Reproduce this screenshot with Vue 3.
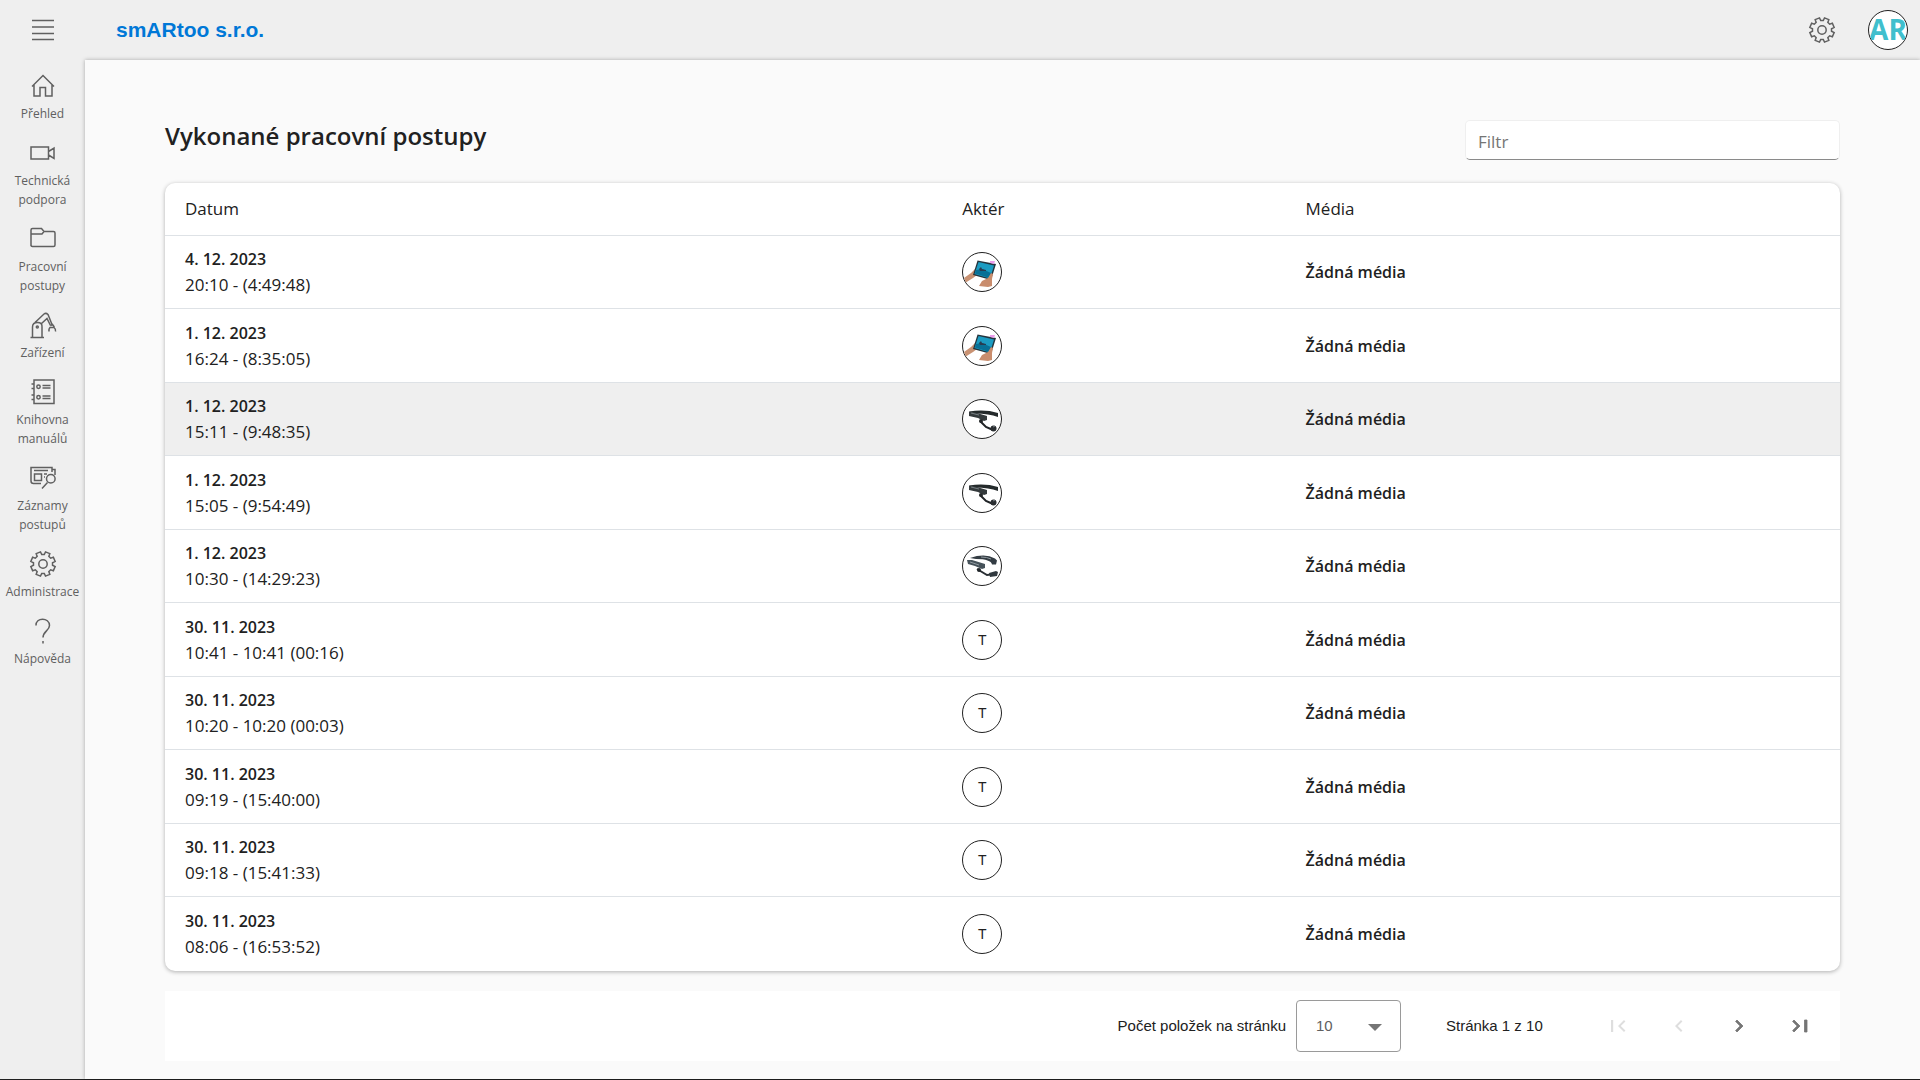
<script setup>
import { ref } from 'vue'

const filter = ref('')
const pageSize = ref('10')

const nav = [
  { id: 'home', label: 'Přehled' },
  { id: 'video', label: 'Technická podpora' },
  { id: 'folder', label: 'Pracovní postupy' },
  { id: 'robot', label: 'Zařízení' },
  { id: 'manual', label: 'Knihovna manuálů' },
  { id: 'records', label: 'Záznamy postupů' },
  { id: 'gear', label: 'Administrace' },
  { id: 'help', label: 'Nápověda' },
]

const rows = [
  { date: '4. 12. 2023', time: '20:10 - (4:49:48)', actor: 'tablet' },
  { date: '1. 12. 2023', time: '16:24 - (8:35:05)', actor: 'tablet' },
  { date: '1. 12. 2023', time: '15:11 - (9:48:35)', actor: 'headset', active: true },
  { date: '1. 12. 2023', time: '15:05 - (9:54:49)', actor: 'headset' },
  { date: '1. 12. 2023', time: '10:30 - (14:29:23)', actor: 'headset2' },
  { date: '30. 11. 2023', time: '10:41 - 10:41 (00:16)', actor: 'T' },
  { date: '30. 11. 2023', time: '10:20 - 10:20 (00:03)', actor: 'T' },
  { date: '30. 11. 2023', time: '09:19 - (15:40:00)', actor: 'T' },
  { date: '30. 11. 2023', time: '09:18 - (15:41:33)', actor: 'T' },
  { date: '30. 11. 2023', time: '08:06 - (16:53:52)', actor: 'T' },
]

// Eight-toothed outline shared by the sidebar and the header gear.
const gearPath = (() => {
  const points = []
  const teeth = 8
  for (let i = 0; i < teeth; i++) {
    const base = (i * 2 * Math.PI) / teeth + Math.PI / 8
    for (const [offset, radius] of [[-0.26, 9.6], [-0.19, 12.4], [0.19, 12.4], [0.26, 9.6]]) {
      const a = base + offset
      points.push(`${(14 + radius * Math.cos(a)).toFixed(2)} ${(14 + radius * Math.sin(a)).toFixed(2)}`)
    }
  }
  return `M${points.join('L')}Z`
})()
</script>

<template>
  <div class="app">
    <header class="topbar">
      <button class="icon-button menu" type="button" aria-label="Menu">
        <svg class="icon" viewBox="0 0 28 28"><path d="M3 4.5h22M3 11h22M3 17.500h22M3 23.500h22" /></svg>
      </button>
      <a class="brand" href="#">smARtoo s.r.o.</a>
      <button class="icon-button settings" type="button" aria-label="Nastavení">
        <svg class="icon" viewBox="0 0 28 28"><path :d="gearPath" /><circle cx="14" cy="14" r="4.200" /></svg>
      </button>
      <button class="avatar profile" type="button" aria-label="Profil">
        <svg viewBox="0 0 38 38"><text x="19" y="29" text-anchor="middle" class="logo">AR</text></svg>
      </button>
    </header>

    <div class="body">
      <nav class="sidebar">
        <a v-for="item in nav" :key="item.id" class="nav-item" href="#">
          <svg class="icon" viewBox="0 0 28 28" aria-hidden="true">
            <path v-if="item.id === 'home'" d="M3 14.500 14 3.500 25 14.500M5 13v11h6v-8.500h5.500V24H23V13" />
            <g v-else-if="item.id === 'video'"><path d="M2 8h17.500v12H2zM19.500 12.500l5.500-3.500v10.500l-5.500-3.500" /></g>
            <g v-else-if="item.id === 'folder'"><path d="M2 21V5q0-1.500 1.500-1.500h9l2.500 3h9.500Q26 6.500 26 8v12q0 1.500-1.500 1.500h-21Q2 21.500 2 20M2 9h11l2-2.500" /></g>
            <g v-else-if="item.id === 'robot'">
              <path d="M1.500 26.500H15M3.500 26V16q0-4.500 5-4.500T13 16v10M6 11.500 15 3q2-1.500 4 .5l4 10M12 13l6-5.500 3.500 7M21.500 14.500l2-1 1.500 2v1q2 1.500 1.500 4M21.500 16q-2 1.500-1.500 4.500M21 16.500h4" />
              <circle cx="8.300" cy="16" r="1" />
            </g>
            <g v-else-if="item.id === 'manual'">
              <path d="M5 2h20v23.500H5zM2.500 6H5M2.500 10.500H5M2.500 17H5M2.500 21.500H5M13.500 7.500h8M13.500 10h8M13.500 18h8M13.500 20.500h8" />
              <circle cx="9.500" cy="8.700" r="1.700" /><circle cx="9.500" cy="19.200" r="1.700" />
            </g>
            <g v-else-if="item.id === 'records'">
              <path d="M12 19.500H4.500Q2 19.500 2 17V3.500h21V8M23 5.500h3V11M5 6.500h14M5.500 10h7v6.500h-7zM15 10h3M15 13h1M18.500 18.500 13 24.500" />
              <circle cx="21.800" cy="14.800" r="4.300" />
            </g>
            <g v-else-if="item.id === 'gear'"><path :d="gearPath" /><circle cx="14" cy="14" r="4.200" /></g>
            <g v-else><path d="M7 8.500C6.500 0 20.500 0 20.500 8.500c0 5-6.500 6-6.500 12M14 24v2.500" /></g>
          </svg>
          <span class="nav-label">{{ item.label }}</span>
        </a>
      </nav>

      <main class="content">
        <div class="heading">
          <h1>Vykonané pracovní postupy</h1>
          <input v-model="filter" class="filter" type="text" placeholder="Filtr" aria-label="Filtr" />
        </div>

        <div class="card">
          <table>
            <thead>
              <tr>
                <th class="col-date" scope="col">Datum</th>
                <th class="col-actor" scope="col">Aktér</th>
                <th scope="col">Média</th>
              </tr>
            </thead>
            <tbody>
              <tr v-for="(row, i) in rows" :key="i" :class="{ active: row.active }">
                <td>
                  <div class="date">{{ row.date }}</div>
                  <div>{{ row.time }}</div>
                </td>
                <td>
                  <div class="avatar">
                    <template v-if="row.actor === 'T'">T</template>
                    <svg v-else-if="row.actor === 'tablet'" viewBox="0 0 38 38">
                      <path d="M1 25 8 20l6-6 2 1-3 5 1 2-4 3-8 5z" fill="#c99273" />
                      <path d="M14.500 7.500 33 11 28 27 10 22z" fill="#24343d" />
                      <path d="M15.500 9 31 12.500 27 25.500 11.500 21z" fill="#1c9cc2" />
                      <path d="m13 17 6-1 9 4-1.500 5L12 20.500z" fill="#087096" />
                      <path d="m16 16 2-2 1 2 4 1v1h-6z" fill="#283c50" />
                      <path d="M27 8h5l-1 3-4-1z" fill="#ec9cec" />
                      <path d="m16 33 3-5 6-3 3-5 2 1-1 5v7l-4 1z" fill="#c98d6d" />
                    </svg>
                    <svg v-else-if="row.actor === 'headset'" viewBox="0 0 38 38">
                      <path d="M6 11.500Q22 9 35 13v4Q26 13.500 12 13.500z" fill="#242a2b" />
                      <path d="M6 11.500 14 13l10 3v4l-3 1-6-3-9-2z" fill="#343a3c" />
                      <path d="m17 21 6 6 7 3" fill="none" stroke="#202326" stroke-width="2" />
                      <circle cx="18" cy="21" r="2" fill="#242729" /><circle cx="30.500" cy="28.500" r="3" fill="#292d30" />
                      <path d="m8 13 8 2M30 27l2-1" stroke="#798185" stroke-width="1" />
                    </svg>
                    <svg v-else viewBox="0 0 38 38">
                      <path d="M7 11Q22 6 32 11.500l2 2-1 4h-4Q28 12 13 12z" fill="#333c43" />
                      <path d="M4 13h5l13 4v4l-3 1-7-3-7-2z" fill="#46525a" />
                      <path d="m14 22 10 6 9-1" fill="none" stroke="#292f34" stroke-width="2" />
                      <path d="m26 26 7-2 2 1-1 4-7 1z" fill="#30383e" /><circle cx="16" cy="23" r="2" fill="#202529" />
                      <path d="m7 15 9 3M18 10q6 0 10 2" fill="none" stroke="#8f999f" stroke-width="1" />
                    </svg>
                  </div>
                </td>
                <td class="media">Žádná média</td>
              </tr>
            </tbody>
          </table>
        </div>

        <div class="pagination">
          <label for="page-size">Počet položek na stránku</label>
          <div class="select-wrap">
            <select id="page-size" v-model="pageSize">
              <option>10</option>
              <option>25</option>
              <option>100</option>
            </select>
            <svg class="arrow" viewBox="0 0 14 8"><path d="M0 1h14L7 8z" /></svg>
          </div>
          <span class="page-info">Stránka 1 z 10</span>
          <div class="pager">
            <button type="button" disabled aria-label="První"><svg viewBox="0 0 24 24"><path d="M18.410 16.590 13.820 12l4.590-4.590L17 6l-6 6 6 6zM4 6h2.200v12H4z" /></svg></button>
            <button type="button" disabled aria-label="Předchozí"><svg viewBox="0 0 24 24"><path d="M15.410 7.410 14 6l-6 6 6 6 1.410-1.410L10.830 12z" /></svg></button>
            <button type="button" aria-label="Další"><svg viewBox="0 0 24 24"><path class="bold" d="M10 6 8.590 7.410 13.170 12l-4.580 4.590L10 18l6-6z" /></svg></button>
            <button type="button" aria-label="Poslední"><svg viewBox="0 0 24 24"><path class="bold" d="M5.590 7.410 10.180 12l-4.590 4.590L7 18l6-6-6-6zM17.500 6h2.500v12h-2.500z" /></svg></button>
          </div>
        </div>
      </main>
    </div>
  </div>
</template>

<style>
body {
  margin: 0;
  background: #efefef;
}
</style>

<style scoped>
.app {
  box-sizing: border-box;
  display: flex;
  flex-direction: column;
  min-height: 100vh;
  border-bottom: 1px solid #202020;
  background: #efefef;
  color: #212121;
  font-family: "Open Sans", "Noto Sans", sans-serif;
  font-size: 17px;
}
.app *,
.app *::before {
  box-sizing: border-box;
}
button {
  padding: 0;
  border: 0;
  background: none;
  font: inherit;
  cursor: pointer;
}
a {
  text-decoration: none;
}
.topbar {
  display: flex;
  align-items: center;
  height: 60px;
  padding-right: 12px;
}
.icon-button {
  display: flex;
  justify-content: center;
  align-items: center;
}
.icon {
  display: block;
  flex: none;
  width: 28px;
  height: 28px;
  fill: none;
  stroke: #606060;
  stroke-width: 1.5;
}
.menu {
  width: 85px;
  height: 60px;
}
.brand {
  margin-left: 31px;
  color: #0078d7;
  font: bold 21px/24px "Liberation Sans", sans-serif;
}
.settings {
  width: 48px;
  height: 48px;
  margin-left: auto;
  margin-right: 22px;
}
.avatar {
  display: flex;
  justify-content: center;
  align-items: center;
  width: 40px;
  height: 40px;
  overflow: hidden;
  border: 1px solid #212121;
  border-radius: 50%;
  background: #fff;
  font: 14px/20px "Liberation Sans", sans-serif;
}
.avatar svg {
  display: block;
  width: 38px;
  height: 38px;
}
.logo {
  fill: #40bfcd;
  font: 700 28px "Open Sans", sans-serif;
}
.body {
  display: flex;
  flex: 1;
}
.sidebar {
  flex: none;
  width: 85px;
  padding-top: 12px;
}
.nav-item {
  display: flex;
  flex-direction: column;
  align-items: center;
  gap: 4px;
  padding-bottom: 16px;
  color: #606060;
}
.nav-label {
  max-width: 80px;
  font-size: 12px;
  line-height: 19px;
  text-align: center;
}
.content {
  flex: 1;
  min-width: 0;
  padding: 60px 80px 18px;
  background: #fafafa;
  box-shadow: 0 0 4px rgba(0, 0, 0, 0.3);
}
.heading {
  display: flex;
  justify-content: space-between;
  align-items: flex-start;
  margin-bottom: 23px;
}
h1 {
  margin: 0;
  font-size: 24px;
  font-weight: 600;
  line-height: 32px;
}
.filter {
  width: 375px;
  height: 40px;
  padding: 2px 12px 0;
  border: 1px solid #efefef;
  border-bottom-color: #8a8a8a;
  border-radius: 5px;
  background: #fff;
  color: #212121;
  font: 17px "Open Sans", sans-serif;
}
.filter::placeholder {
  color: #757575;
}
.card {
  overflow: hidden;
  border-radius: 10px;
  background: #fff;
  box-shadow: 0 1px 4px rgba(0, 0, 0, 0.3);
}
table {
  width: 100%;
  border-collapse: separate;
  border-spacing: 0;
  table-layout: fixed;
}
th,
td {
  padding: 0 20px;
  border-bottom: 1px solid #dee2e6;
  text-align: left;
  vertical-align: middle;
  line-height: 26px;
}
th {
  height: 53px;
  font-weight: 400;
}
.col-date {
  width: 46.4%;
}
.col-actor {
  width: 20.5%;
}
td {
  height: 73px;
}
tr:nth-child(even) td {
  height: 74px;
}
tbody tr:last-child td {
  border-bottom: 0;
}
.active td {
  background: #efefef;
}
.date,
.media {
  font-size: 16px;
  font-weight: 600;
}
.pagination {
  display: flex;
  justify-content: flex-end;
  align-items: center;
  height: 70px;
  margin-top: 20px;
  padding-right: 17px;
  background: #fff;
  font: 15px/20px "Liberation Sans", sans-serif;
}
.select-wrap {
  position: relative;
  margin: 0 45px 0 10px;
}
select {
  display: block;
  width: 105px;
  height: 52px;
  padding: 0 19px;
  appearance: none;
  border: 1px solid #9a9a9a;
  border-radius: 4px;
  background: #fff;
  color: #606060;
  font: inherit;
}
.arrow {
  position: absolute;
  top: 23px;
  right: 19px;
  width: 14px;
  height: 8px;
  fill: #757575;
  pointer-events: none;
}
.page-info {
  min-width: 104px;
}
.pager {
  display: flex;
  gap: 12px;
  margin-left: 45px;
}
.pager button {
  display: flex;
  justify-content: center;
  align-items: center;
  width: 48px;
  height: 48px;
}
.pager svg {
  width: 24px;
  height: 24px;
  fill: #757575;
}
.pager .bold {
  stroke: #757575;
  stroke-width: 0.8;
}
.pager button:disabled svg {
  fill: #dedede;
}
</style>
